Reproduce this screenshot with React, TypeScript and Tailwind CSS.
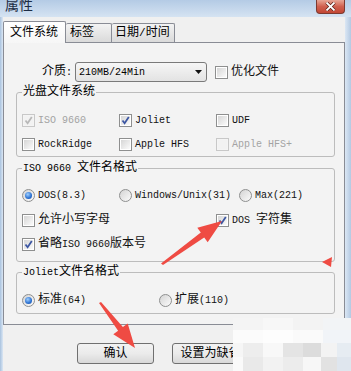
import React from "react";

const CJK = "text-[12px]";

function Check({ checked = false, disabled = false }: { checked?: boolean; disabled?: boolean }) {
  return (
    <span
      className={`relative inline-flex w-[13px] h-[13px] shrink-0 border ${
        disabled ? "border-[#c8c8c8] bg-[#f4f4f4]" : "border-[#8e8f8f] bg-white"
      }`}
    >
      <span
        className={`absolute inset-[1px] ${
          disabled ? "bg-[#f2f2f2]" : "bg-linear-to-br from-[#d6d6d6] to-[#fbfbfb]"
        }`}
      />
      {checked && (
        <svg className="absolute left-0 top-0" width="11" height="11" viewBox="0 0 11 11">
          <path
            d="M2.5 5.5 L4.6 8.2 L8.8 2"
            fill="none"
            stroke={disabled ? "#b8b8b8" : "#3d57a3"}
            strokeWidth="1.8"
          />
        </svg>
      )}
    </span>
  );
}

function Radio({ checked = false }: { checked?: boolean }) {
  return (
    <span className="relative inline-flex w-[13px] h-[13px] shrink-0 rounded-full border border-[#8e8f8f] bg-linear-to-br from-[#d4d4d4] to-[#fbfbfb] items-center justify-center">
      {checked && (
        <span className="w-[7px] h-[7px] rounded-full bg-[radial-gradient(circle_at_40%_35%,#9fd0ff,#2a6fd0_60%,#1b4f9e)]" />
      )}
    </span>
  );
}

function Item({
  box,
  children,
  w,
  muted = false,
}: {
  box: React.ReactNode;
  children: React.ReactNode;
  w?: string;
  muted?: boolean;
}) {
  return (
    <div className={`flex items-center h-[16px] ${w ?? ""}`}>
      {box}
      <span className={`ml-[3px] whitespace-nowrap ${muted ? "text-[#a3a3a3]" : "text-[#111]"}`}>{children}</span>
    </div>
  );
}

function Group({
  legend,
  children,
  className = "",
}: {
  legend: React.ReactNode;
  children: React.ReactNode;
  className?: string;
}) {
  return (
    <fieldset
      className={`ml-[12px] w-[319px] border border-[#bcbcbc] rounded-[3px] pl-[5px] ${className}`}
    >
      <legend className="px-[1px] h-[14px] leading-[14px] whitespace-nowrap">{legend}</legend>
      {children}
    </fieldset>
  );
}

export default function App() {
  return (
    <div className="relative w-[351px] h-[371px] overflow-hidden bg-[#f0f0f0] font-['Liberation_Mono','Noto_Sans_CJK_SC',monospace] text-[10px] text-black">
      {/* title bar */}
      <div className="h-[17px] flex items-start bg-linear-to-b from-[#b4cbe5] to-[#d5e3f2]">
        <span className="ml-[5px] -mt-[5px] text-[14px] leading-[18px] text-[#1c2c44] font-['Noto_Sans_CJK_SC',sans-serif]">
          属性
        </span>
        <div className="ml-auto mr-[6px] w-[29px] h-[14px] rounded-b-[4px] border border-t-0 border-[#7c3a30] bg-linear-to-b from-[#e7a595] via-[#d0604f] to-[#c24634] flex items-center justify-center">
          <svg width="11" height="9" viewBox="0 0 11 9">
            <path d="M1.5 0.5 L9.5 8.5 M9.5 0.5 L1.5 8.5" stroke="#5a2018" strokeWidth="3.2" />
            <path d="M1.5 0.5 L9.5 8.5 M9.5 0.5 L1.5 8.5" stroke="#ffffff" strokeWidth="1.8" />
          </svg>
        </div>
      </div>

      <div className="flex h-[354px]">
        {/* left frame */}
        <div className="w-[3px] bg-linear-to-r from-[#a9c2de] to-[#dbe7f4]" />
        {/* client */}
        <div className="w-[342px] flex flex-col">
          {/* tabs */}
          <div className="mt-[4px] h-[21px] flex items-end pl-0">
            <div className="relative z-10 -mb-px h-[22px] w-[63px] border border-b-0 border-[#898c95] rounded-t-[2px] bg-linear-to-b from-white to-[#f6f6f6] flex items-center pl-[6px]">
              <span className={CJK}>文件系统</span>
            </div>
            <div className="h-[19px] w-[46px] border border-l-0 border-b-0 border-[#898c95] rounded-t-[2px] bg-linear-to-b from-[#f3f3f3] to-[#dadada] flex items-center pl-[4px]">
              <span className={CJK}>标签</span>
            </div>
            <div className="h-[19px] w-[63px] border border-l-0 border-b-0 border-[#898c95] rounded-t-[2px] bg-linear-to-b from-[#f3f3f3] to-[#dadada] flex items-center pl-[3px]">
              <span className={CJK}>日期</span>
              <span className="text-[11px]">/</span>
              <span className={CJK}>时间</span>
            </div>
          </div>
          {/* panel */}
          <div className="h-[283px] border border-[#898c95] bg-[#f3f3f3] flex flex-col">
            {/* media row */}
            <div className="mt-[19px] h-[20px] flex items-center">
              <span className="ml-[38px] w-[30px] whitespace-nowrap">
                <span className={CJK}>介质</span>:
              </span>
              <div className="ml-[3px] w-[132px] h-[20px] rounded-[3px] border border-[#7a7a7a] bg-linear-to-b from-[#f6f6f6] to-[#e3e3e3] flex items-center pl-[3px]">
                <span>210MB/24Min</span>
                <svg className="ml-auto mr-[4px]" width="7" height="4" viewBox="0 0 7 4">
                  <path d="M0 0 H7 L3.5 4 Z" fill="#111" />
                </svg>
              </div>
              <div className="ml-[8px]">
                <Item box={<Check />}>
                  <span className={CJK}>优化文件</span>
                </Item>
              </div>
            </div>

            {/* group 1 */}
            <Group legend={<span className={CJK}>光盘文件系统</span>} className="mt-[3px] pb-[4px]">
              <div className="mt-[13px] flex">
                <Item w="w-[97px]" box={<Check checked disabled />} muted>
                  ISO 9660
                </Item>
                <Item w="w-[97px]" box={<Check checked />}>
                  Joliet
                </Item>
                <Item box={<Check />}>UDF</Item>
              </div>
              <div className="mt-[8px] flex">
                <Item w="w-[97px]" box={<Check />}>
                  RockRidge
                </Item>
                <Item w="w-[97px]" box={<Check />}>
                  Apple HFS
                </Item>
                <Item box={<Check disabled />} muted>
                  Apple HFS+
                </Item>
              </div>
            </Group>

            {/* group 2 */}
            <Group
              legend={
                <span>
                  ISO 9660 <span className={CJK}>文件名格式</span>
                </span>
              }
              className="mt-[4px] pb-[9px]"
            >
              <div className="mt-[12px] flex">
                <Item w="w-[97px]" box={<Radio checked />}>
                  DOS(8.3)
                </Item>
                <Item w="w-[120px]" box={<Radio />}>
                  Windows/Unix(31)
                </Item>
                <Item box={<Radio />}>Max(221)</Item>
              </div>
              <div className="mt-[9px] flex">
                <Item w="w-[194px]" box={<Check />}>
                  <span className={CJK}>允许小写字母</span>
                </Item>
                <Item box={<Check checked />}>
                  DOS <span className={CJK}>字符集</span>
                </Item>
              </div>
              <div className="mt-[8px] flex">
                <Item box={<Check checked />}>
                  <span className={CJK}>省略</span>ISO 9660<span className={CJK}>版本号</span>
                </Item>
              </div>
            </Group>

            {/* group 3 */}
            <Group
              legend={
                <span>
                  Joliet<span className={CJK}>文件名格式</span>
                </span>
              }
              className="mt-[3px] pb-[5px]"
            >
              <div className="mt-[13px] flex">
                <Item w="w-[137px]" box={<Radio checked />}>
                  <span className={CJK}>标准</span>(64)
                </Item>
                <Item box={<Radio />}>
                  <span className={CJK}>扩展</span>(110)
                </Item>
              </div>
            </Group>
          </div>

          {/* buttons */}
          <div className="mt-[18px] flex">
            <button className="ml-[74px] w-[77px] h-[21px] rounded-[3px] border border-[#707070] bg-linear-to-b from-[#f2f2f2] via-[#ebebeb] to-[#d8d8d8] flex items-center justify-center">
              <span className={CJK}>确认</span>
            </button>
            <button className="ml-[18px] w-[77px] h-[21px] rounded-[3px] border border-[#707070] bg-linear-to-b from-[#f2f2f2] via-[#ebebeb] to-[#d8d8d8] flex items-center justify-center">
              <span className={CJK}>设置为缺省</span>
            </button>
          </div>
        </div>
        {/* right frame */}
        <div className="w-[6px] bg-linear-to-r from-[#dbe7f4] to-[#b3c9e2]" />
      </div>

      {/* pixelated blur overlay */}
      <div className="absolute left-[233px] top-[318px] w-[118px] h-[53px] flex flex-col">
        <div className="h-[12px] flex">
          <div className="w-[30px] bg-[#f4f4f4]" />
          <div className="w-[30px] bg-[#f7f7f7]" />
          <div className="w-[30px] bg-[#f3f3f3]" />
          <div className="w-[28px] bg-[#f2f4f6]" />
        </div>
        <div className="h-[13px] flex">
          <div className="w-[30px] bg-[#fbfbfb]" />
          <div className="w-[30px] bg-[#fdfdfd]" />
          <div className="w-[30px] bg-[#fafafa]" />
          <div className="w-[28px] bg-[#f1f4f8]" />
        </div>
        <div className="h-[14px] flex">
          <div className="w-[10px] bg-[#f6f6f6]" />
          <div className="w-[20px] bg-[#ededed]" />
          <div className="w-[20px] bg-[#f8f8f8]" />
          <div className="w-[20px] bg-[#e4e4e4]" />
          <div className="w-[18px] bg-[#dcdcdc]" />
          <div className="w-[16px] bg-[#f3f3f3]" />
          <div className="w-[14px] bg-[#e6ecf2]" />
        </div>
        <div className="h-[14px] flex">
          <div className="w-[10px] bg-[#fafafa]" />
          <div className="w-[20px] bg-[#e9e9e9]" />
          <div className="w-[20px] bg-[#f2f2f2]" />
          <div className="w-[20px] bg-[#ececec]" />
          <div className="w-[18px] bg-[#f7f7f7]" />
          <div className="w-[16px] bg-[#e2e2e2]" />
          <div className="w-[14px] bg-[#dfe6ee]" />
        </div>
      </div>

      {/* red annotation arrows */}
      <svg className="absolute left-0 top-0 pointer-events-none" width="351" height="371" viewBox="0 0 351 371">
        <polygon
          points="161,263.5 163,265 204.2,237.4 207.7,242.3 222,221 197.3,227.7 200.8,232.6"
          fill="#ef4b43"
        />
        <polygon
          points="99,303 101,302 122.9,327.1 127.7,323.5 135,348 113.3,334.3 118.1,330.7"
          fill="#ef4b43"
        />
        <polygon points="322,262 332,257 331,267" fill="#ef4b43" />
      </svg>
    </div>
  );
}
